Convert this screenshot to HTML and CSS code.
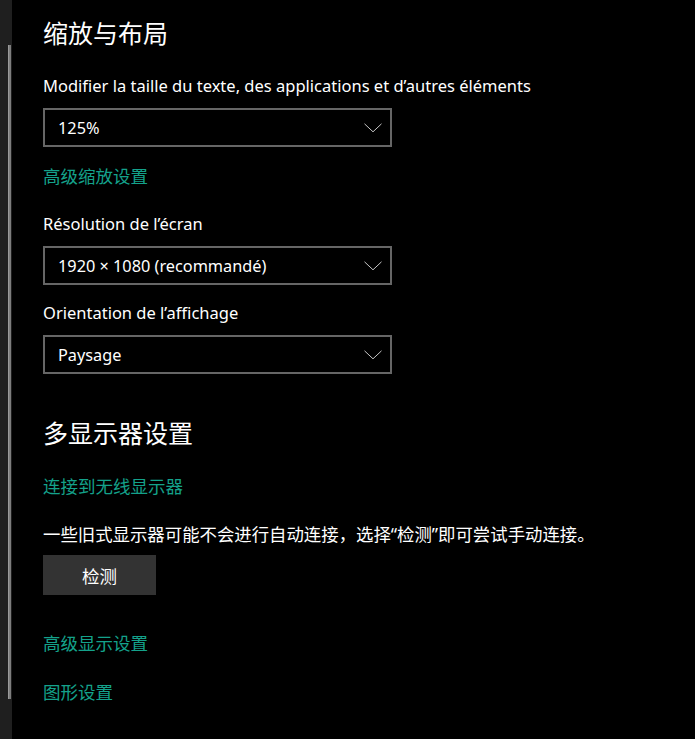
FILE: index.html
```html
<!DOCTYPE html>
<html lang="zh-CN">
<head>
<meta charset="utf-8">
<title>缩放与布局</title>
<link rel="stylesheet" href="styles.css">
</head>
<body>
<div class="page">
  <div class="rail"><div class="thumb"></div></div>
  <main class="content">
    <h1 class="heading">缩放与布局</h1>
    <div class="label l1">Modifier la taille du texte, des applications et d’autres éléments</div>
    <div class="select s1"><span class="select-text">125%</span><svg class="chev" width="18" height="10" viewBox="0 0 18 10"><path d="M0.5 0.8 L9 8.8 L17.5 0.8" fill="none" stroke="#c4c4c4" stroke-width="1"/></svg></div>
    <a class="link k1" href="#">高级缩放设置</a>
    <div class="label l2">Résolution de l’écran</div>
    <div class="select s2"><span class="select-text">1920 × 1080 (recommandé)</span><svg class="chev" width="18" height="10" viewBox="0 0 18 10"><path d="M0.5 0.8 L9 8.8 L17.5 0.8" fill="none" stroke="#c4c4c4" stroke-width="1"/></svg></div>
    <div class="label l3">Orientation de l’affichage</div>
    <div class="select s3"><span class="select-text">Paysage</span><svg class="chev" width="18" height="10" viewBox="0 0 18 10"><path d="M0.5 0.8 L9 8.8 L17.5 0.8" fill="none" stroke="#c4c4c4" stroke-width="1"/></svg></div>
    <h2 class="heading h2">多显示器设置</h2>
    <a class="link k2" href="#">连接到无线显示器</a>
    <p class="text">一些旧式显示器可能不会进行自动连接，选择“检测”即可尝试手动连接。</p>
    <button class="button">检测</button>
    <a class="link k3" href="#">高级显示设置</a>
    <a class="link k4" href="#">图形设置</a>
  </main>
</div>
</body>
</html>
```

FILE: styles.css
```css
html, body {
  margin: 0;
  padding: 0;
  background: #000;
}
body {
  width: 695px;
  height: 739px;
  overflow: hidden;
  font-family: "Noto Sans", "Noto Sans CJK SC", sans-serif;
  color: #fff;
}
.page {
  display: flex;
  height: 739px;
}
.rail {
  width: 12px;
  flex: none;
  background: #1f1f1f;
  display: flex;
  flex-direction: column;
}
.thumb {
  margin-top: 45px;
  margin-left: 8px;
  width: 3px;
  height: 654px;
  background: #7d7d7d;
  border-left: 1px solid #999;
  box-sizing: border-box;
}
.content {
  flex: 1;
  padding: 14px 0 0 31px;
  display: flex;
  flex-direction: column;
  align-items: flex-start;
}
.heading {
  margin: 0;
  font-family: "Noto Sans CJK SC", sans-serif;
  font-weight: 400;
  font-size: 25px;
  line-height: 36px;
  color: #fff;
}
.h2 { margin-top: 40px; }
.label {
  font-size: 16.5px;
  line-height: 24px;
  color: #fff;
}
.l1 { margin-top: 24px; }
.l2 { margin-top: 24px; }
.l3 { margin-top: 16px; }
.select {
  margin-top: 10px;
  width: 349px;
  height: 39px;
  box-sizing: border-box;
  border: 2px solid #666;
  display: flex;
  align-items: center;
  justify-content: space-between;
  padding: 0 8px 0 13px;
}
.select-text {
  font-size: 16.3px;
  color: #fff;
}
.chev { display: block; }
.link {
  font-family: "Noto Sans CJK SC", sans-serif;
  font-size: 17.5px;
  line-height: 24px;
  color: #14a28b;
  text-decoration: none;
}
.k1 { margin-top: 17px; }
.k2 { margin-top: 24px; }
.k3 { margin-top: 36px; }
.k4 { margin-top: 25px; }
.text {
  margin: 24px 0 0;
  font-family: "Noto Sans", "Noto Sans CJK SC", sans-serif;
  font-size: 17.4px;
  line-height: 24px;
  color: #fff;
}
.button {
  margin-top: 9px;
  width: 113px;
  height: 40px;
  border: none;
  background: #333;
  color: #fff;
  font-family: "Noto Sans CJK SC", sans-serif;
  font-size: 17.5px;
  padding: 0;
}
```
